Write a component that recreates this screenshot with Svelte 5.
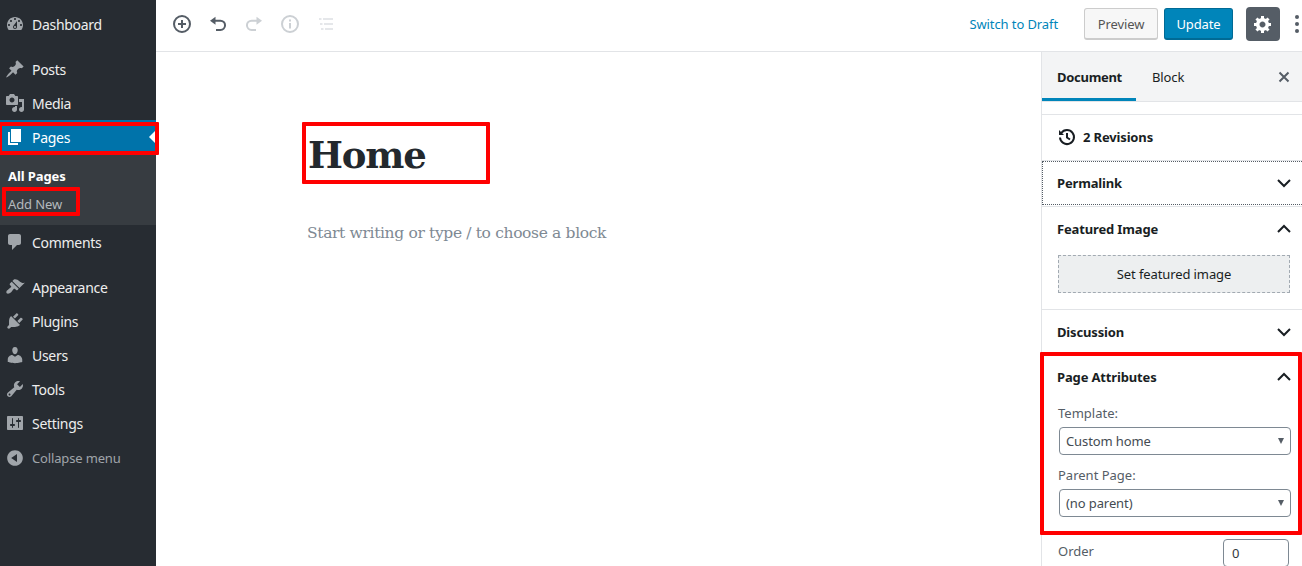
<script lang="ts">
	const icons: Record<string, string> = {
		dashboard: 'M3.76 16h12.48c1.1-1.37 1.76-3.11 1.76-5 0-4.42-3.58-8-8-8s-8 3.58-8 8c0 1.89.66 3.63 1.76 5zM10 4c.55 0 1 .45 1 1s-.45 1-1 1-1-.45-1-1 .45-1 1-1zM6 6c.55 0 1 .45 1 1s-.45 1-1 1-1-.45-1-1 .45-1 1-1zm8 0c.55 0 1 .45 1 1s-.45 1-1 1-1-.45-1-1 .45-1 1-1zm-5.37 5.55L12 7v6c0 1.1-.9 2-2 2s-2-.9-2-2c0-.57.24-1.08.63-1.45zM4 10c.55 0 1 .45 1 1s-.45 1-1 1-1-.45-1-1 .45-1 1-1zm12 0c.55 0 1 .45 1 1s-.45 1-1 1-1-.45-1-1 .45-1 1-1zm-5 3c0-.55-.45-1-1-1s-1 .45-1 1 .45 1 1 1 1-.45 1-1z',
		post: 'M10.44 3.02l1.82-1.82 6.36 6.35-1.83 1.82c-1.05-.68-2.48-.57-3.41.36l-.75.75c-.92.93-1.04 2.35-.35 3.41l-1.83 1.82-2.41-2.41-2.8 2.79c-.42.42-3.38 2.71-3.8 2.29s1.86-3.39 2.28-3.81l2.79-2.79L4.1 9.36l1.83-1.82c1.05.69 2.48.57 3.4-.36l.75-.75c.93-.92 1.05-2.35.36-3.41z',
		media: 'M13 11V4c0-.55-.45-1-1-1h-1.67L9 1H5L3.67 3H2c-.55 0-1 .45-1 1v7c0 .55.45 1 1 1h10c.55 0 1-.45 1-1zM7 4.5c1.38 0 2.5 1.12 2.5 2.5S8.38 9.5 7 9.5 4.5 8.38 4.5 7 5.62 4.5 7 4.5zM14 6h5v10.5c0 1.38-1.12 2.5-2.5 2.5S14 17.88 14 16.5s1.12-2.5 2.5-2.5c.17 0 .34.02.5.05V9h-3V6zm-4 8.05V13h2v3.5c0 1.38-1.12 2.5-2.5 2.5S7 17.88 7 16.5 8.12 14 9.5 14c.17 0 .34.02.5.05z',
		page: 'M6 15V2h10v13H6zm-1 1h8v2H3V5h2v11z',
		comments: 'M5 2h9c1.1 0 2 .9 2 2v7c0 1.1-.9 2-2 2h-2l-5 5v-5H5c-1.1 0-2-.9-2-2V4c0-1.1.9-2 2-2z',
		appearance: 'M14.48 11.06L7.41 3.99l1.5-1.5c.5-.56 2.3-.47 3.51.32 1.21.8 1.43 1.28 2.91 2.1 1.18.64 2.45 1.26 4.45.85zm-.71.71L6.7 4.7 4.93 6.47c-.39.39-.39 1.02 0 1.41l1.06 1.06c.39.39.39 1.03 0 1.42-.6.6-1.43 1.11-2.21 1.69-.35.26-.7.53-1.01.84C1.43 13.23.91 15.2 1.7 16.3c1.1.79 3.08.27 4.42-1.06.31-.31.58-.66.85-1.01.57-.78 1.08-1.61 1.69-2.21.39-.39 1.02-.39 1.41 0l1.06 1.06c.39.39 1.02.39 1.41 0z',
		plugins: 'M13.11 4.36L9.87 7.6 8 5.73l3.24-3.24c.35-.34 1.05-.2 1.56.32.52.51.66 1.21.31 1.55zm-8 1.77l.91-1.12 9.01 9.01-1.19.84c-.71.71-2.63 1.16-3.82 1.16H6.14L4.9 17.26c-.59.59-1.54.59-2.12 0-.59-.58-.59-1.53 0-2.12l1.24-1.24v-3.88c0-1.13.4-3.19 1.09-3.89zm7.26 3.97l3.24-3.24c.34-.35 1.04-.21 1.55.31.52.51.66 1.21.31 1.55l-3.24 3.25z',
		users: 'M10 9.25c-2.27 0-2.73-3.44-2.73-3.44C7 4.02 7.82 2 9.97 2c2.16 0 2.98 2.02 2.71 3.81 0 0-.41 3.44-2.68 3.44zm0 2.57L12.72 10c2.39 0 4.52 2.33 4.52 4.53v2.49s-3.65 1.13-7.24 1.13c-3.65 0-7.24-1.13-7.24-1.13v-2.49c0-2.25 1.94-4.53 4.47-4.53z',
		tools: 'M16.68 9.77c-1.34 1.34-3.3 1.67-4.95.99l-5.41 6.52c-.99.99-2.59.99-3.58 0s-.99-2.59 0-3.57l6.52-5.42c-.68-1.65-.35-3.61.99-4.95 1.28-1.28 3.12-1.62 4.72-1.06l-2.89 2.89 2.82 2.82 2.86-2.87c.53 1.58.18 3.39-1.08 4.65zM3.81 16.21c.4.39 1.04.39 1.43 0 .4-.4.4-1.04 0-1.43-.39-.4-1.03-.4-1.43 0-.39.39-.39 1.03 0 1.43z',
		settings: 'M18 16V4c0-.55-.45-1-1-1H3c-.55 0-1 .45-1 1v12c0 .55.45 1 1 1h14c.55 0 1-.45 1-1zM8 11h1c.55 0 1 .45 1 1s-.45 1-1 1H8v1.5c0 .28-.22.5-.5.5s-.5-.22-.5-.5V13H6c-.55 0-1-.45-1-1s.45-1 1-1h1V5.5c0-.28.22-.5.5-.5s.5.22.5.5V11zm5-2h-1c-.55 0-1-.45-1-1s.45-1 1-1h1V5.5c0-.28.22-.5.5-.5s.5.22.5.5V7h1c.55 0 1 .45 1 1s-.45 1-1 1h-1v5.5c0 .28-.22.5-.5.5s-.5-.22-.5-.5V9z',
		collapse: 'M10 2.16c4.33 0 7.84 3.51 7.84 7.84s-3.51 7.84-7.84 7.84S2.16 14.33 2.16 10 5.71 2.16 10 2.16zm2 11.72V6.12L6.18 9.97z'
	};
	const cog = 'M18 12h-2.18c-.17.7-.44 1.35-.81 1.93l1.54 1.54-2.1 2.1-1.54-1.54c-.58.36-1.23.63-1.91.79V19H8v-2.18c-.68-.16-1.33-.43-1.91-.79l-1.54 1.54-2.12-2.12 1.54-1.54c-.36-.58-.63-1.23-.79-1.91H1V9.03h2.17c.16-.7.44-1.35.8-1.94L2.43 5.55l2.1-2.1 1.54 1.54c.58-.37 1.24-.64 1.93-.81V2h3v2.18c.68.16 1.33.43 1.91.79l1.54-1.54 2.12 2.12-1.54 1.54c.36.59.64 1.24.8 1.94H18V12zm-8.5 1.5c1.66 0 3-1.34 3-3s-1.34-3-3-3-3 1.34-3 3 1.34 3 3 3z';

	const groupOne = [
		{ label: 'Posts', icon: 'post' },
		{ label: 'Media', icon: 'media' }
	];
	const groupTwo = [
		{ label: 'Appearance', icon: 'appearance' },
		{ label: 'Plugins', icon: 'plugins' },
		{ label: 'Users', icon: 'users' },
		{ label: 'Tools', icon: 'tools' },
		{ label: 'Settings', icon: 'settings' }
	];
</script>

{#snippet chevron(up: boolean)}
	<svg class="chevron" viewBox="0 0 24 24" width="24" height="24"><path d={up ? 'M6 15l6-6 6 6' : 'M6 9l6 6 6-6'} fill="none" stroke="#191e23" stroke-width="2" /></svg>
{/snippet}

{#snippet menuItem(label: string, icon: string)}
	<div class="menu-item">
		<svg class="menu-icon" viewBox="0 0 20 20" width="20" height="20"><path d={icons[icon]} /></svg>
		<span>{label}</span>
	</div>
{/snippet}

<div class="app">
	<nav class="sidebar">
		{@render menuItem('Dashboard', 'dashboard')}
		<div class="sep"></div>
		{#each groupOne as item}
			{@render menuItem(item.label, item.icon)}
		{/each}
		<div class="menu-item current">
			<svg class="menu-icon" viewBox="0 0 20 20" width="20" height="20"><path d={icons.page} /></svg>
			<span>Pages</span>
			<i class="notch"></i>
			<i class="mark"></i>
		</div>
		<div class="submenu">
			<div class="sub-link strong">All Pages</div>
			<div class="sub-link add">Add New<i class="mark"></i></div>
		</div>
		{@render menuItem('Comments', 'comments')}
		<div class="sep"></div>
		{#each groupTwo as item}
			{@render menuItem(item.label, item.icon)}
		{/each}
		<div class="menu-item collapse">
			<svg class="menu-icon" viewBox="0 0 20 20" width="20" height="20"><path d={icons.collapse} /></svg>
			<span>Collapse menu</span>
		</div>
	</nav>

	<div class="main">
		<header class="topbar">
			<div class="tools">
				<svg viewBox="0 0 24 24" width="24" height="24" fill="none" stroke="#555d66" stroke-width="2"><circle cx="12" cy="12" r="8" /><path d="M8 12h8M12 8v8" /></svg>
				<svg viewBox="0 0 24 24" width="24" height="24" fill="none" stroke="#555d66" stroke-width="2"><path d="M9 8.700h5.400a4.650 4.650 0 0 1 0 9.300H10" /><path d="M9.500 4.700v8L4 8.700z" fill="#555d66" stroke="none" /></svg>
				<svg viewBox="0 0 24 24" width="24" height="24" fill="none" stroke="#ccd0d4" stroke-width="2"><path d="M15 8.700H9.600a4.650 4.650 0 0 0 0 9.300H14" /><path d="M14.500 4.700v8L20 8.700z" fill="#ccd0d4" stroke="none" /></svg>
				<svg viewBox="0 0 24 24" width="24" height="24" fill="none" stroke="#ccd0d4" stroke-width="2"><circle cx="12" cy="12" r="8" /><path d="M12 11v5.500M12 7.500v2" /></svg>
				<svg viewBox="0 0 24 24" width="24" height="24" fill="none" stroke="#dde0e3" stroke-width="1.500"><path d="M9 7h10M10 12h9M11 17h8M5 7h2.500M6 12h2.500M7 17h2.500" /></svg>
			</div>
			<div class="actions">
				<span class="draft">Switch to Draft</span>
				<button class="btn preview">Preview</button>
				<button class="btn update">Update</button>
				<button class="cog"><svg viewBox="0 0 20 20" width="20" height="20"><path d={cog} fill="#fff" /></svg></button>
				<span class="dots"><i></i><i></i><i></i></span>
			</div>
		</header>

		<div class="body">
			<section class="editor">
				<div class="title-wrap">
					<h1>Home</h1>
					<i class="mark"></i>
				</div>
				<p class="placeholder">Start writing or type / to choose a block</p>
			</section>

			<aside class="panel">
				<div class="tabs">
					<span class="tab active">Document</span>
					<span class="tab">Block</span>
					<svg class="close" viewBox="0 0 24 24" width="24" height="24"><path d="M7.500 7.500l9 9M16.500 7.500l-9 9" stroke="#555d66" stroke-width="2" fill="none" /></svg>
				</div>
				<div class="gap"></div>
				<div class="row revisions">
					<svg viewBox="0 0 20 20" width="20" height="20" fill="none" stroke="#191e23" stroke-width="2"><path d="M4.300 6A7 7 0 1 1 3 10.500" /><path d="M10 6v4.500l3 2" /><path d="M2 3v5h5z" fill="#191e23" stroke="none" /></svg>
					<b>2 Revisions</b>
				</div>
				<div class="row head permalink"><b>Permalink</b>{@render chevron(false)}</div>
				<div class="featured">
					<div class="row head plain"><b>Featured Image</b>{@render chevron(true)}</div>
					<button class="set-image">Set featured image</button>
				</div>
				<div class="row head discussion"><b>Discussion</b>{@render chevron(false)}</div>
				<div class="attributes">
					<div class="row head plain"><b>Page Attributes</b>{@render chevron(true)}</div>
					<label class="field">
						Template:
						<span class="select"><select><option>Custom home</option></select></span>
					</label>
					<label class="field">
						Parent Page:
						<span class="select"><select><option>(no parent)</option></select></span>
					</label>
					<i class="mark"></i>
				</div>
				<label class="order">
					<span>Order</span>
					<input type="text" value="0" />
				</label>
			</aside>
		</div>
	</div>
</div>

<style>
	:global(body) {
		margin: 0;
		overflow: hidden;
	}

	.app {
		display: flex;
		height: 566px;
		font-family: 'Noto Sans', 'Open Sans', sans-serif;
		font-size: 13px;
		color: #191e23;
		background: #fff;
		overflow: hidden;
	}

	.mark {
		position: absolute;
		border: 4px solid #f00;
		border-radius: 1px;
		box-sizing: border-box;
		pointer-events: none;
	}

	/* admin menu */
	.sidebar {
		flex: 0 0 156px;
		padding-top: 7px;
		background: #272c32;
		position: relative;
		z-index: 2;
	}

	.sep {
		height: 11px;
	}

	.menu-item {
		position: relative;
		display: flex;
		align-items: center;
		gap: 7px;
		height: 34px;
		padding-left: 5px;
		color: #eee;
		font-size: 14px;
		letter-spacing: -0.3px;
	}

	.menu-icon {
		flex: none;
		fill: #a0a5aa;
	}

	.menu-item.current {
		background: #0073aa;
		color: #fff;
	}

	.current .menu-icon {
		fill: #fff;
	}

	.current .mark {
		inset: 2px -3px -1px -2px;
	}

	.notch {
		position: absolute;
		right: 0;
		top: 10px;
		border: 7px solid transparent;
		border-right-color: #fff;
		border-left: 0;
	}

	.submenu {
		height: 71px;
		box-sizing: border-box;
		padding-top: 8px;
		background: #373c41;
	}

	.sub-link {
		position: relative;
		height: 28px;
		line-height: 28px;
		margin-left: 8px;
		width: fit-content;
		font-size: 13px;
		color: #b4b9be;
		letter-spacing: -0.1px;
	}

	.sub-link.strong {
		color: #fff;
		font-weight: 700;
	}

	.sub-link .mark {
		inset: -3px -18px 2px -6px;
	}

	.collapse {
		height: 36px;
		color: #a0a5aa;
		font-size: 13px;
		letter-spacing: -0.15px;
	}

	/* editor area */
	.main {
		flex: 1;
		min-width: 0;
		display: flex;
		flex-direction: column;
	}

	.topbar {
		flex: 0 0 52px;
		box-sizing: border-box;
		display: flex;
		align-items: center;
		justify-content: space-between;
		border-bottom: 1px solid #e2e4e7;
		padding: 0 0 3px 14px;
	}

	.tools {
		display: flex;
		gap: 12px;
	}

	.actions {
		display: flex;
		align-items: center;
	}

	.draft {
		color: #0085ba;
		margin-right: 26px;
		letter-spacing: -0.1px;
	}

	.btn {
		height: 32px;
		box-sizing: border-box;
		border-radius: 3px;
		font: inherit;
		letter-spacing: -0.1px;
		padding: 0;
	}

	.preview {
		width: 74px;
		margin-right: 6px;
		color: #555;
		background: #f7f7f7;
		border: 1px solid #ccc;
		border-bottom-width: 2px;
	}

	.update {
		width: 69px;
		margin-right: 13px;
		color: #fff;
		background: #0085ba;
		border: 1px solid #006a95;
		border-bottom-width: 2px;
	}

	.cog {
		width: 34px;
		height: 34px;
		display: flex;
		align-items: center;
		justify-content: center;
		padding: 0;
		border: 0;
		border-radius: 4px;
		background: #555d66;
		margin-right: 15px;
	}

	.dots {
		width: 7px;
		display: flex;
		flex-direction: column;
		gap: 3px;
	}

	.dots i {
		width: 4px;
		height: 4px;
		border-radius: 50%;
		background: #555d66;
	}

	.body {
		flex: 1;
		min-height: 0;
		display: flex;
	}

	.editor {
		flex: 1;
		padding: 70px 0 0 146px;
		min-width: 0;
	}

	.title-wrap {
		position: relative;
		width: 188px;
		height: 62px;
	}

	.title-wrap .mark {
		inset: 0;
	}

	h1 {
		margin: 0;
		padding: 8px 0 0 6px;
		font-family: 'DejaVu Serif', serif;
		font-size: 37px;
		line-height: 50px;
		letter-spacing: -1.2px;
		font-weight: 700;
		color: #23282d;
	}

	.placeholder {
		margin: 37px 0 0 5px;
		font-family: 'DejaVu Serif', serif;
		font-size: 15.5px;
		line-height: 24px;
		letter-spacing: -0.35px;
		color: #7e8993;
	}

	/* settings panel */
	.panel {
		flex: 0 0 261px;
		box-sizing: border-box;
		border-left: 1px solid #e2e4e7;
		position: relative;
	}

	.tabs {
		height: 50px;
		box-sizing: border-box;
		display: flex;
		align-items: stretch;
		background: #f3f4f5;
		border-bottom: 1px solid #e2e4e7;
		position: relative;
	}

	.tab {
		display: flex;
		align-items: center;
		justify-content: center;
		height: 49px;
		box-sizing: border-box;
		padding: 1px 16px 0;
		letter-spacing: -0.1px;
	}

	.tab.active {
		width: 94px;
		padding: 3px 0 0 1px;
		font-weight: 700;
		letter-spacing: -0.3px;
		border-bottom: 3px solid #0085ba;
	}

	.close {
		position: absolute;
		right: 6px;
		top: 13px;
	}

	.gap {
		height: 12px;
		border-bottom: 1px solid #e2e4e7;
	}

	.row {
		display: flex;
		align-items: center;
		padding: 0 6px 0 15px;
	}

	.row b {
		letter-spacing: -0.15px;
	}

	.head {
		justify-content: space-between;
	}

	.revisions {
		height: 46px;
		justify-content: flex-start;
		gap: 6px;
		border-bottom: 1px solid #e2e4e7;
		box-sizing: border-box;
		padding-bottom: 2px;
	}

	.permalink {
		height: 44px;
		box-sizing: border-box;
		border: 1px dotted #555d66;
		border-right: 0;
		margin-bottom: 1px;
		padding-left: 14px;
	}

	.plain {
		height: 44px;
	}

	.featured {
		height: 104px;
		box-sizing: border-box;
		border-top: 1px solid #e2e4e7;
		border-bottom: 1px solid #e2e4e7;
	}

	.featured .plain {
		height: 43px;
	}

	.set-image {
		display: block;
		width: 232px;
		height: 38px;
		margin: 5px 0 0 16px;
		padding: 0;
		font: inherit;
		letter-spacing: -0.1px;
		color: #191e23;
		background: #edeff0;
		border: 1px dashed #a2aab2;
	}

	.discussion {
		height: 44px;
	}

	.attributes {
		position: relative;
		height: 180px;
		box-sizing: border-box;
		margin-top: -2px;
		padding-top: 3px;
	}

	.attributes .plain {
		margin-bottom: 5px;
	}

	.attributes .mark {
		inset: 0 0 -3px -2px;
	}

	.field {
		display: block;
		padding: 0 11px 0 16px;
		margin-bottom: 11px;
		color: #555d66;
		line-height: 18px;
	}

	.select {
		display: block;
		position: relative;
		margin: 5px 0 0 1px;
	}

	.select::after {
		content: '';
		position: absolute;
		right: 7px;
		top: 11px;
		border: 3.5px solid transparent;
		border-top: 6px solid #555d66;
		border-bottom: 0;
	}

	select {
		appearance: none;
		display: block;
		width: 100%;
		height: 28px;
		padding: 0 0 0 6px;
		font: inherit;
		letter-spacing: -0.1px;
		color: #444b52;
		background: #fff;
		border: 1px solid #7e8993;
		border-radius: 4px;
	}

	.order {
		display: flex;
		justify-content: space-between;
		padding: 7px 13px 0 16px;
		color: #555d66;
	}

	.order span {
		margin-top: 3px;
	}

	input {
		width: 66px;
		height: 28px;
		box-sizing: border-box;
		padding: 0 8px;
		font: inherit;
		color: #32373c;
		border: 1px solid #7e8993;
		border-radius: 4px;
	}
</style>
